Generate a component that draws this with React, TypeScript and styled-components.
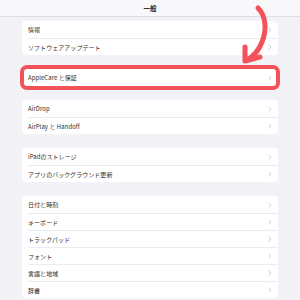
import React from "react";
import styled, { createGlobalStyle } from "styled-components";

const GlobalStyle = createGlobalStyle`
  html, body {
    margin: 0;
    padding: 0;
    background: #f2f2f7;
  }
  body {
    font-family: "Noto Sans CJK JP", "Noto Sans", "Liberation Sans", sans-serif;
  }
`;

const Page = styled.div`
  position: relative;
  width: 300px;
  height: 300px;
  overflow: hidden;
  background: #f2f2f7;
`;

const Header = styled.div`
  height: 16px;
  display: flex;
  align-items: center;
  justify-content: center;
  background: #f8f8fa;
  border-bottom: 1px solid #dedee3;
  font-size: 6.5px;
  font-weight: 700;
  color: #1c1c1e;
`;

const List = styled.div`
  display: flex;
  flex-direction: column;
  gap: 14px;
  padding: 4px 22px 0;
`;

const Card = styled.div<{ $highlight?: boolean }>`
  position: relative;
  background: #ffffff;
  border-radius: 4px;
  ${(p) =>
    p.$highlight &&
    `
    &::after {
      content: "";
      position: absolute;
      left: -2px;
      right: -2px;
      top: -4px;
      bottom: -4px;
      border: 4px solid #f4525a;
      border-radius: 7px;
      pointer-events: none;
    }
  `}
`;

const Row = styled.div`
  height: 17px;
  display: flex;
  align-items: center;
  padding-left: 6px;
  & + & > div {
    border-top: 1px solid #ececf0;
  }
`;

const RowInner = styled.div`
  flex: 1;
  height: 100%;
  display: flex;
  align-items: center;
  justify-content: space-between;
  padding-right: 6px;
  box-sizing: border-box;
`;

const Label = styled.span`
  font-size: 6px;
  color: #2c2c2e;
  letter-spacing: 0.05px;
`;

const Arrow = styled.svg`
  position: absolute;
  left: 236px;
  top: 2px;
  pointer-events: none;
`;

function Chevron() {
  return (
    <svg width="4" height="6" viewBox="0 0 4 6">
      <path d="M1 0.8 L3 3 L1 5.2" fill="none" stroke="#c5c5ca" strokeWidth="0.8" strokeLinecap="round" strokeLinejoin="round" />
    </svg>
  );
}

const groups: { items: string[]; highlight?: boolean }[] = [
  { items: ["情報", "ソフトウェアアップデート"] },
  { items: ["AppleCare と保証"], highlight: true },
  { items: ["AirDrop", "AirPlay と Handoff"] },
  { items: ["iPadのストレージ", "アプリのバックグラウンド更新"] },
  { items: ["日付と時刻", "キーボード", "トラックパッド", "フォント", "言語と地域", "辞書"] },
];

export default function App() {
  return (
    <Page>
      <GlobalStyle />
      <Header>一般</Header>
      <List>
        {groups.map((g, i) => (
          <Card key={i} $highlight={g.highlight}>
            {g.items.map((item) => (
              <Row key={item}>
                <RowInner>
                  <Label>{item}</Label>
                  <Chevron />
                </RowInner>
              </Row>
            ))}
          </Card>
        ))}
      </List>
      <Arrow width="40" height="64" viewBox="0 0 40 64">
        <path
          d="M22 6 C30 14 31 28 26 40 C23 48 18 54 11 58"
          fill="none"
          stroke="#f4525a"
          strokeWidth="5"
          strokeLinecap="round"
        />
        <path
          d="M9 45 L9 59 L24 55"
          fill="none"
          stroke="#f4525a"
          strokeWidth="5"
          strokeLinecap="round"
          strokeLinejoin="round"
        />
      </Arrow>
    </Page>
  );
}
